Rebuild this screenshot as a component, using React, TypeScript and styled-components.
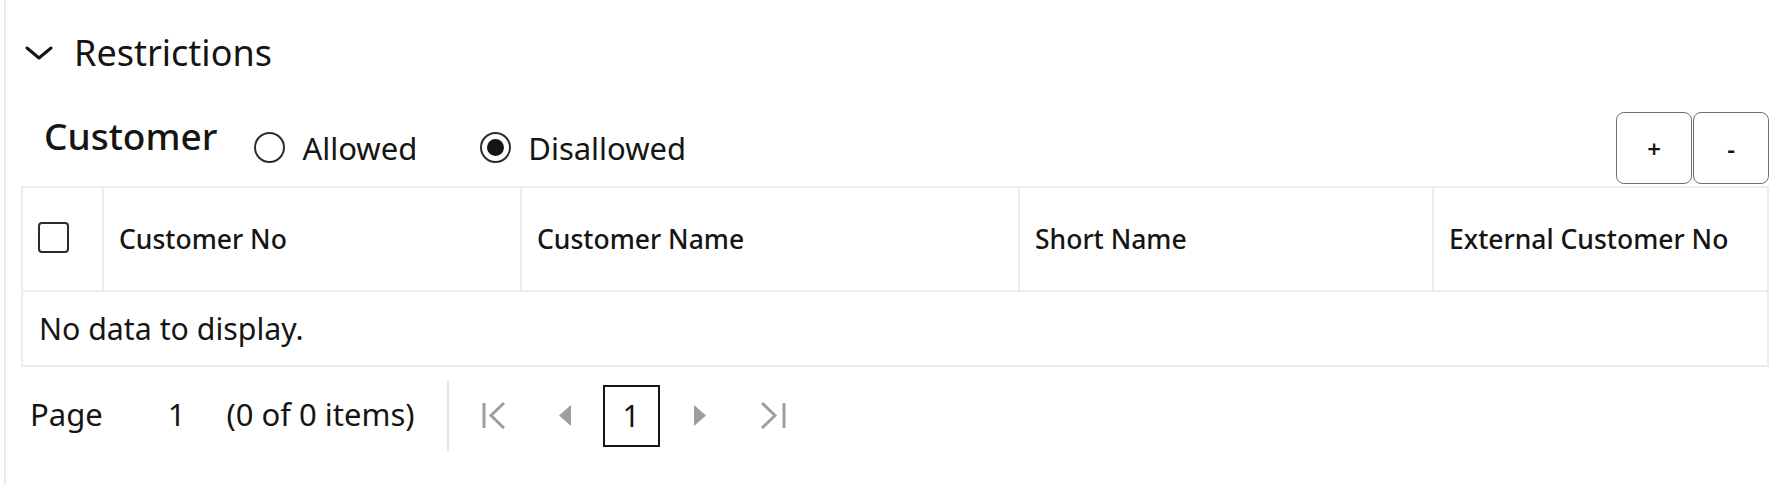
import React from "react";
import styled, { createGlobalStyle } from "styled-components";

const GlobalStyle = createGlobalStyle`
  html, body {
    margin: 0;
    padding: 0;
    background: #ffffff;
  }
  body {
    font-family: "Noto Sans", "Open Sans", sans-serif;
    color: #161513;
  }
`;

const Page = styled.div`
  margin-left: 4px;
  border-left: 2px solid #ebebeb;
  padding: 0 15px 0 15px;
  min-height: 485px;
  box-sizing: border-box;
`;

const SectionHeader = styled.div`
  display: flex;
  align-items: center;
  padding-top: 31px;
  height: 44px;
  gap: 21px;
  padding-left: 4px;
`;

const SectionTitle = styled.h2`
  margin: 0;
  font-size: 36px;
  line-height: 44px;
  font-weight: 400;
`;

const Toolbar = styled.div`
  display: flex;
  align-items: flex-start;
  margin-top: 37px;
  height: 71px;
  padding-left: 23px;
`;

const GroupLabel = styled.span`
  font-size: 37px;
  font-weight: 500;
  line-height: 44px;
  margin-top: 2px;
  margin-right: 37px;
`;

const RadioGroup = styled.div`
  display: flex;
  gap: 63px;
  margin-top: 20px;
`;

const RadioOption = styled.label`
  display: flex;
  align-items: center;
  gap: 17px;
  font-size: 31px;
  line-height: 30px;
`;

const RadioCircle = styled.span<{ $checked?: boolean }>`
  width: 31px;
  height: 31px;
  box-sizing: border-box;
  border: 2px solid #2b2b2b;
  border-radius: 50%;
  display: inline-flex;
  align-items: center;
  justify-content: center;
  &::after {
    content: "";
    width: 17px;
    height: 17px;
    border-radius: 50%;
    background: #161513;
    display: ${({ $checked }) => ($checked ? "block" : "none")};
  }
`;

const Actions = styled.div`
  margin-left: auto;
  display: flex;
  gap: 1px;
`;

const ActionButton = styled.button`
  width: 76px;
  height: 72px;
  box-sizing: border-box;
  border: 1.5px solid #6f6f6f;
  border-radius: 8px;
  background: #ffffff;
  font-family: inherit;
  font-size: 24px;
  font-weight: 600;
  color: #161513;
  padding: 0;
`;

const Table = styled.div`
  margin-top: 3px;
  border: 2px solid #ececec;
  box-sizing: border-box;
`;

const HeaderRow = styled.div`
  display: grid;
  grid-template-columns: 79px 418px 498px 414px 1fr;
  height: 104px;
  border-bottom: 2px solid #ececec;
  box-sizing: border-box;
`;

const HeaderCell = styled.div`
  display: flex;
  align-items: center;
  padding-left: 15px;
  font-size: 26.5px;
  font-weight: 500;
  border-left: 2px solid #ececec;
  white-space: nowrap;
  &:first-child {
    border-left: none;
    padding-left: 15px;
  }
`;

const Checkbox = styled.span`
  width: 31px;
  height: 31px;
  box-sizing: border-box;
  border: 2px solid #2b2b2b;
  border-radius: 4px;
  margin-top: -4px;
`;

const EmptyRow = styled.div`
  height: 73px;
  display: flex;
  align-items: center;
  padding-left: 16px;
  font-size: 30.3px;
`;

const Pager = styled.div`
  display: flex;
  align-items: center;
  height: 71px;
  margin-top: 13px;
  padding-left: 9px;
  font-size: 31px;
`;

const PagerText = styled.span<{ $gap?: number }>`
  margin-right: ${({ $gap }) => $gap ?? 0}px;
  margin-bottom: 4px;
`;

const PagerDivider = styled.span`
  width: 2px;
  align-self: stretch;
  background: #e6e6e6;
  margin: 0 33px 0 32px;
`;

const PagerIcon = styled.span<{ $gap?: number }>`
  display: inline-flex;
  color: #9e9e9e;
  margin-right: ${({ $gap }) => $gap ?? 0}px;
`;

const PageBox = styled.span`
  width: 57px;
  height: 62px;
  box-sizing: border-box;
  border: 2px solid #161513;
  display: inline-flex;
  align-items: center;
  justify-content: center;
  margin-right: 33px;
  font-size: 30px;
`;

const Chevron = () => (
  <svg width="28" height="16" viewBox="0 0 28 16" fill="none">
    <path d="M2 3 L14 13 L26 3" stroke="#161513" strokeWidth="3" strokeLinecap="round" strokeLinejoin="round" />
  </svg>
);

const FirstIcon = () => (
  <svg width="24" height="27" viewBox="0 0 24 27" fill="none">
    <path d="M2 1 V26" stroke="currentColor" strokeWidth="3" />
    <path d="M22 1 L9 13.5 L22 26" stroke="currentColor" strokeWidth="3" />
  </svg>
);

const LastIcon = () => (
  <svg width="26" height="27" viewBox="0 0 26 27" fill="none">
    <path d="M24 1 V26" stroke="currentColor" strokeWidth="3" />
    <path d="M2 1 L15 13.5 L2 26" stroke="currentColor" strokeWidth="3" />
  </svg>
);

const PrevIcon = () => (
  <svg width="14" height="23" viewBox="0 0 14 23">
    <path d="M13 1 L1 11.5 L13 22 Z" fill="currentColor" />
  </svg>
);

const NextIcon = () => (
  <svg width="14" height="23" viewBox="0 0 14 23">
    <path d="M1 1 L13 11.5 L1 22 Z" fill="currentColor" />
  </svg>
);

const columns = ["Customer No", "Customer Name", "Short Name", "External Customer No"];

export default function App() {
  return (
    <>
      <GlobalStyle />
      <Page>
        <SectionHeader>
          <Chevron />
          <SectionTitle>Restrictions</SectionTitle>
        </SectionHeader>

        <Toolbar>
          <GroupLabel>Customer</GroupLabel>
          <RadioGroup>
            <RadioOption>
              <RadioCircle />
              Allowed
            </RadioOption>
            <RadioOption>
              <RadioCircle $checked />
              Disallowed
            </RadioOption>
          </RadioGroup>
          <Actions>
            <ActionButton>+</ActionButton>
            <ActionButton>-</ActionButton>
          </Actions>
        </Toolbar>

        <Table>
          <HeaderRow>
            <HeaderCell>
              <Checkbox />
            </HeaderCell>
            {columns.map((c) => (
              <HeaderCell key={c}>{c}</HeaderCell>
            ))}
          </HeaderRow>
          <EmptyRow>No data to display.</EmptyRow>
        </Table>

        <Pager>
          <PagerText $gap={65}>Page</PagerText>
          <PagerText $gap={41}>1</PagerText>
          <PagerText>(0 of 0 items)</PagerText>
          <PagerDivider />
          <PagerIcon $gap={52}>
            <FirstIcon />
          </PagerIcon>
          <PagerIcon $gap={31}>
            <PrevIcon />
          </PagerIcon>
          <PageBox>1</PageBox>
          <PagerIcon $gap={53}>
            <NextIcon />
          </PagerIcon>
          <PagerIcon>
            <LastIcon />
          </PagerIcon>
        </Pager>
      </Page>
    </>
  );
}
